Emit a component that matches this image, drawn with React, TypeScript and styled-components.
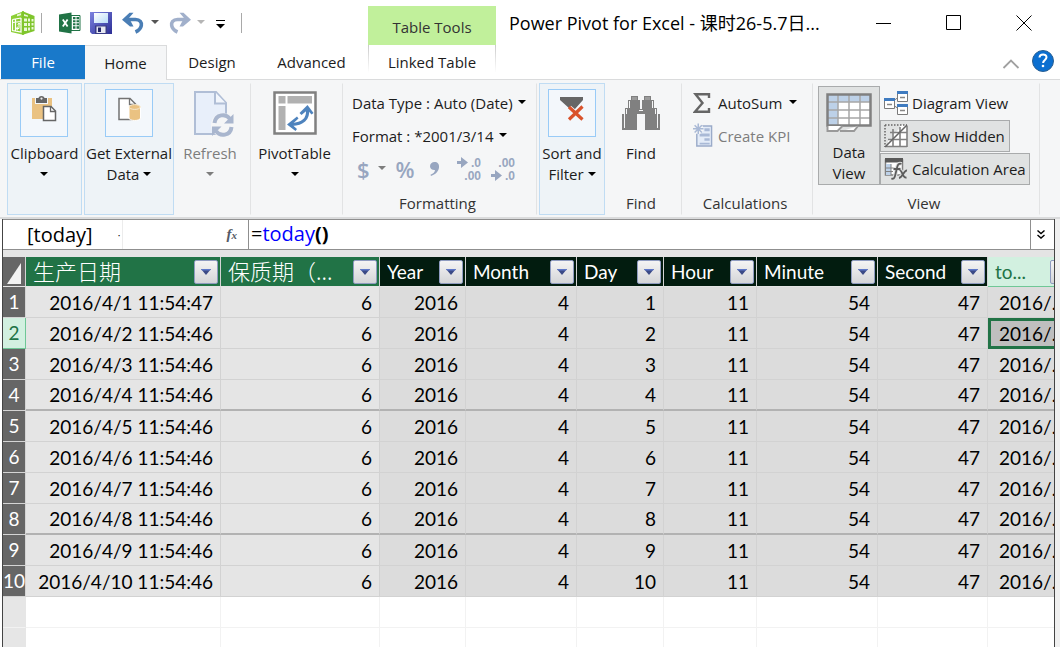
import React from 'react';
import styled, { createGlobalStyle, css } from 'styled-components';

const UI_FONT = '"Open Sans", "Noto Sans CJK SC", sans-serif';
const GRID_FONT = 'Lato, "Noto Sans CJK SC", sans-serif';

const Global = createGlobalStyle`
  * { box-sizing: border-box; }
  body { margin: 0; background: #fff; font-family: ${UI_FONT}; font-size: 15px; color: #1c1c1c; }
  button, input { font: inherit; color: inherit; }
  button { background: none; border: 0; padding: 0; margin: 0; }
`;

const Window = styled.div`
  display: flex;
  flex-direction: column;
  height: 100vh;
  overflow: hidden;
  background: #fff;
`;

/* ---------- title bar ---------- */

const TitleBar = styled.header`
  display: flex;
  height: 45px;
  flex: none;
`;

const QuickAccess = styled.div`
  display: flex;
  align-items: center;
  width: 368px;
  flex: none;
  padding-left: 10px;
`;

const Divider = styled.span`
  width: 1px;
  height: 20px;
  background: #a9a9a9;
`;

const QuickButton = styled.button<{ $gap: number }>`
  display: flex;
  align-items: center;
  margin-left: ${(p) => p.$gap}px;
`;

const ContextLabel = styled.div`
  width: 128px;
  flex: none;
  margin-top: 6px;
  background: #c1f09b;
  line-height: 43px;
  text-align: center;
  color: #333;
`;

const WindowTitle = styled.h1`
  flex: 1;
  min-width: 0;
  margin: 0;
  padding-left: 13px;
  font-size: 18px;
  font-weight: 400;
  line-height: 46px;
  white-space: nowrap;
  color: #000;
`;

const WindowButtons = styled.div`
  display: flex;
  padding-right: 1px;
`;

const WindowButton = styled.button`
  display: flex;
  align-items: center;
  justify-content: center;
  width: 70px;
  height: 45px;
`;

/* ---------- tabs ---------- */

const TabRow = styled.nav`
  display: flex;
  flex: none;
  height: 35px;
  padding: 0 5px 0 1px;
  box-shadow: inset 0 -1px #dadbdc;
`;

const Tab = styled.button<{ $width: number; $kind?: 'file' | 'active' | 'context' }>`
  width: ${(p) => p.$width}px;
  height: 34px;
  line-height: 34px;
  ${(p) =>
    p.$kind === 'file' &&
    css`
      background: #1979ca;
      color: #fff;
    `}
  ${(p) =>
    p.$kind === 'active' &&
    css`
      height: 35px;
      background: #f5f6f7;
      border: 1px solid #dadbdc;
      border-width: 1px 1px 0 0;
    `}
  ${(p) =>
    p.$kind === 'context' &&
    css`
      border: solid;
      border-width: 0 1px;
      border-image: linear-gradient(#c8c8c8, #fff 80%) 1;
    `}
`;

const TabTools = styled.div`
  display: flex;
  align-items: center;
  gap: 11px;
  margin-left: auto;
`;

/* ---------- ribbon ---------- */

const Ribbon = styled.div`
  display: flex;
  flex: none;
  height: 139px;
  padding: 3px 0 3px 7px;
  background: #f5f6f7;
  border-bottom: 2px solid #dadbdc;
`;

const Group = styled.section<{ $width: number; $collapsed?: boolean; $separator?: boolean; $gap?: number }>`
  display: flex;
  flex-direction: column;
  flex: none;
  align-items: center;
  width: ${(p) => p.$width}px;
  height: 132px;
  margin-right: ${(p) => p.$gap ?? 0}px;
  border: 1px solid transparent;
  ${(p) =>
    p.$separator &&
    css`
      padding-right: 5px;
      border-right-color: #e2e3e4;
    `}
  ${(p) =>
    p.$collapsed &&
    css`
      background: #eef3f7;
      border-color: #c0dcf3;
    `}
`;

const GroupLabel = styled.div`
  margin-top: auto;
  line-height: 21px;
  color: #333;
`;

const BigButton = styled.button<{ $muted?: boolean }>`
  display: flex;
  flex-direction: column;
  align-items: center;
  padding-top: 5px;
  line-height: 21px;
  white-space: nowrap;
  color: ${(p) => (p.$muted ? '#7d7d7d' : '#1c1c1c')};
`;

const IconSlot = styled.span<{ $boxed?: boolean }>`
  display: flex;
  align-items: center;
  justify-content: center;
  width: 48px;
  height: 48px;
  margin-bottom: 6px;
  ${(p) =>
    p.$boxed &&
    css`
      padding-bottom: 8px;
      background: #f3f7fb;
      border: 1px solid #99cbf7;
    `}
`;

const LabelLine = styled.span`
  display: flex;
  align-items: center;
  justify-content: center;
  gap: 4px;
  height: 21px;
`;

const Caret = styled.i<{ $color?: string }>`
  width: 0;
  height: 0;
  margin-bottom: 2px;
  border: 4px solid transparent;
  border-top-color: ${(p) => p.$color ?? '#000'};
  border-bottom-width: 0;
`;

const Stack = styled.div<{ $pad: number }>`
  display: flex;
  flex-direction: column;
  align-self: stretch;
  padding: 2px 0 0 ${(p) => p.$pad}px;
`;

const RowLine = styled.div`
  display: flex;
  align-items: center;
  height: 33px;
`;

const RowButton = styled.button<{ $muted?: boolean; $gap?: number }>`
  display: flex;
  align-items: center;
  gap: ${(p) => p.$gap ?? 5}px;
  height: 33px;
  white-space: nowrap;
  color: ${(p) => (p.$muted ? '#7d7d7d' : '#1c1c1c')};
`;

const FormatButton = styled.button`
  display: flex;
  align-items: center;
  gap: 8px;
  margin: 0 5px;
  font-size: 22px;
  font-weight: 600;
  color: #98a6c0;
`;

const ViewArea = styled.div`
  display: flex;
  align-self: stretch;
  padding: 2px 0 0 4px;
`;

const DataViewButton = styled(BigButton)`
  width: 62px;
  height: 99px;
  padding-top: 3px;
  background: #e0e2e2;
  border: 1px solid #a9abac;
`;

const ViewToggle = styled.button<{ $on?: boolean; $width: number }>`
  display: flex;
  align-items: center;
  gap: 4px;
  width: ${(p) => p.$width}px;
  height: 32px;
  margin-top: 1px;
  padding-left: 3px;
  white-space: nowrap;
  border: 1px solid ${(p) => (p.$on ? '#a9abac' : 'transparent')};
  background: ${(p) => (p.$on ? '#e0e2e2' : 'transparent')};
`;

/* ---------- workbook ---------- */

const Workbook = styled.main`
  display: flex;
  flex-direction: column;
  flex: 1;
  min-height: 0;
  margin: 0 5px 0 2px;
  border: solid #444;
  border-width: 0 1px;
  box-shadow: 5px 0 #f0f0f0;
  overflow: hidden;
  background: #fff;
`;

const FormulaBar = styled.div`
  display: flex;
  flex: none;
  height: 31px;
  border: solid #8f8f8f;
  border-width: 1px 0;
  font-size: 20px;
  line-height: 28px;
  color: #000;
`;

const NameBox = styled.input`
  width: 113px;
  padding: 0 0 0 24px;
  border: 0;
  outline: 0;
  background: none;
`;

const NameMenu = styled.button`
  width: 7px;
  border-right: 1px solid #ececec;
  font-size: 10px;
  line-height: 20px;
`;

const FunctionButton = styled.button`
  width: 126px;
  padding-right: 11px;
  border-right: 1px solid #8f8f8f;
  text-align: right;
  font-family: "Liberation Serif", serif;
  font-style: italic;
  font-weight: 700;
  font-size: 15px;
  color: #555a66;
  small { font-size: 11px; }
`;

const Formula = styled.div`
  flex: 1;
  min-width: 0;
  padding-left: 2px;
  white-space: nowrap;
  outline: 0;
  span { color: #00f; }
`;

const ExpandButton = styled.button`
  display: flex;
  align-items: center;
  justify-content: center;
  width: 24px;
  border-left: 1px solid #8f8f8f;
  padding-right: 3px;
`;

const Sheet = styled.div`
  flex: 1;
  min-height: 0;
  overflow: hidden;
  border-top: 7px solid #e4e4e4;
`;

const Grid = styled.table`
  table-layout: fixed;
  width: 1073px;
  border-collapse: separate;
  border-spacing: 0;
  font-family: ${GRID_FONT};
  font-size: 19px;
  color: #000;
`;

const HeadRow = styled.tr`
  height: 30px;
`;

const BodyRow = styled.tr`
  height: 31px;
`;

type Tone = 'green' | 'dark' | 'mint';
const headBg = { green: '#217346', dark: '#021c0f', mint: '#d2f0e0' };

const HeadCell = styled.th<{ $tone: Tone }>`
  padding: 0 2px 0 7px;
  background: ${(p) => headBg[p.$tone]};
  border-right: 1px solid #d4d4d4;
  border-bottom: 1px solid ${(p) => (p.$tone === 'mint' ? '#6fc796' : '#e4e4e4')};
  color: ${(p) => (p.$tone === 'mint' ? '#217346' : '#fff')};
  font-weight: 400;
  text-align: left;
`;

const HeadInner = styled.div<{ $cjk?: boolean }>`
  display: flex;
  align-items: center;
  justify-content: space-between;
  height: 29px;
  line-height: 29px;
  white-space: nowrap;
  overflow: hidden;
  ${(p) =>
    p.$cjk &&
    css`
      font-family: "Noto Sans CJK SC", sans-serif;
      font-weight: 300;
      font-size: 22px;
      line-height: 26px;
    `}
`;

const HeadText = styled.span`
  height: 29px;
`;

const FilterButton = styled.button`
  display: flex;
  flex: none;
  align-items: center;
  justify-content: center;
  width: 24px;
  height: 24px;
  border: 1px solid #8e9bc0;
  border-radius: 2px;
  background: linear-gradient(#f4f4f4, #d4d5d8);
`;

const Corner = styled.th`
  padding: 0;
  background: #666;
  border-right: 1px solid #d4d4d4;
  border-bottom: 1px solid #e4e4e4;
  svg { display: block; margin: 3px 0 0 3px; }
`;

const RowHead = styled.th<{ $state?: 'current' | 'blank' }>`
  padding: 0;
  font-weight: 400;
  line-height: 30px;
  text-align: center;
  color: #fff;
  background: #666;
  border: solid #d4d4d4;
  border-width: 0 1px 1px 0;
  ${(p) => p.$state === 'current' && 'background: #d2f0e0; color: #217346; border-color: #6fc796;'}
  ${(p) => p.$state === 'blank' && 'background: #e6e6e6; border-color: #f2f2f2 #e6e6e6;'}
`;

const Cell = styled.td<{ $kind: 'plain' | 'computed' | 'blank'; $page?: boolean; $open?: boolean }>`
  padding: 2px 7px 0;
  overflow: hidden;
  line-height: 28px;
  white-space: nowrap;
  text-align: right;
  background: ${(p) => ({ plain: '#e5e5e5', computed: '#dcdcdc', blank: '#fff' })[p.$kind]};
  border: solid ${(p) => (p.$kind === 'blank' ? '#f2f2f2' : '#d2d2d2')};
  border-width: 0 1px 1px 0;
  ${(p) =>
    p.$page &&
    css`
      padding-top: 1px;
      border-bottom: 2px solid #b2b2b2;
    `}
  ${(p) => p.$open && 'text-align: left; padding-left: 11px;'}
`;

const SelectedCell = styled(Cell)`
  padding: 1px 0 0 8px;
  background: #bfbfbf;
  border: 3px solid #217346;
  line-height: 24px;
`;

/* ---------- icons ---------- */

const AppIcon = () => (
  <svg width="26" height="26" viewBox="0 0 26 26">
    <path d="M1 6 14 1v24L1 22z" fill="#8ccf36" />
    <path d="M12 1 24.500 6v15L12 25z" fill="#7fc52c" />
    <path d="M2.500 9.500 11 8M2.500 9.500v11L11 22V8M5.500 9v12M2.500 12.500 11 11.500" stroke="#fff" fill="none" strokeWidth="1.200" />
    <path d="M14 8.500h3v3h-3zM18 8.500h2v3h-2zM21.500 9h2v2.500h-2zM14 13h3v3h-3zM18 13h2v3h-2zM21.500 13h2v2.500h-2zM14 17.500h3v3.500h-3zM18 17.500h2v3h-2zM21.500 17h2v2.500h-2zM7 4.500l4-1.300v2L7 6.200zM14 4l4 1.500v1.300L14 6z" fill="#e9f8d8" />
    <path d="M9 13.500v5H6.500M8 16.800l-2 1.700 2 1.700M7.800 14.700 9 13l1.300 1.700" stroke="#fff" fill="none" />
  </svg>
);

const ExcelIcon = () => (
  <svg width="22" height="22" viewBox="0 0 22 22">
    <path d="M12 3.500h9v15h-9z" fill="#fff" stroke="#217346" />
    <path d="M14 5h2.500v2.300H14zM17.500 5H20v2.300h-2.500zM14 8.300h2.500v2H14zM17.500 8.300H20v2h-2.500zM14 11.300h2.500v2H14zM17.500 11.300H20v2h-2.500zM14 14.300h2.500v2.500H14zM17.500 14.300H20v2.500h-2.500z" fill="#217346" />
    <path d="M0 2.500 12.500.500v21L0 19.500z" fill="#217346" />
    <path d="m3.800 7.500 4.800 7M8.600 7.500l-4.800 7" stroke="#fff" strokeWidth="1.800" />
  </svg>
);

const SaveIcon = () => (
  <svg width="22" height="22" viewBox="0 0 22 22">
    <defs>
      <linearGradient id="disk" x1="0" y1="0" x2="1" y2="1">
        <stop offset="0" stopColor="#7c83e0" />
        <stop offset="1" stopColor="#2b2d94" />
      </linearGradient>
      <linearGradient id="label" x1="0" y1="0" x2="1" y2="1">
        <stop offset="0" stopColor="#fff" />
        <stop offset="1" stopColor="#b9dcf7" />
      </linearGradient>
    </defs>
    <path d="M0 0h22v22H2l-2-2z" fill="url(#disk)" />
    <path d="M4 1h14v10H4z" fill="url(#label)" />
    <path d="M5 13.500h12V22H5z" fill="#3a3d86" />
    <path d="M6.500 14.500h9V21h-9z" fill="#e6e8f2" />
    <path d="M8 15.500h3V20H8z" fill="#23256b" />
  </svg>
);

const UndoIcon = ({ color, flip }: { color: string; flip?: boolean }) => (
  <svg width="24" height="22" viewBox="0 0 24 22">
    <g transform={flip ? 'matrix(-1 0 0 1 24 0)' : undefined}>
      <path d="M4 7.500h10.500c4.500 0 6.500 3 5.800 6.200-.6 3-2.800 5-5.800 6.300" fill="none" stroke={color} strokeWidth="3.600" />
      <path d="m1 7.700 7.500-7h4L8 6l4.500 8.500H9z" fill={color} />
    </g>
  </svg>
);

const CustomizeIcon = () => (
  <svg width="11" height="12" viewBox="0 0 11 12">
    <path d="M1 3.500h9" stroke="#000" />
    <path d="M1 7h9l-4.500 4.500z" />
  </svg>
);

const ClipboardIcon = () => (
  <svg width="26" height="26" viewBox="0 0 26 26">
    <path d="M1 2h20v21H1z" fill="#eac282" />
    <path d="M4 2h13v6H4z" fill="#f3f7fb" />
    <path d="M5 2h11v5H5z" fill="#666" />
    <path d="M7.500 2.500Q7.500 0 10.500 0t3 2.500" fill="#666" />
    <circle cx="10.500" cy="2.600" r="1.100" fill="#eee" />
    <path d="M12.500 10.500h7.500l4.500 4.500v9.500h-12z" fill="#fff" stroke="#666" strokeWidth="1.500" />
    <path d="M19.500 10.500V15.500h5" fill="none" stroke="#666" strokeWidth="1.300" />
  </svg>
);

const ExternalDataIcon = () => (
  <svg width="24" height="26" viewBox="0 0 24 26">
    <path d="M2 2.500h11l5.500 5.500v15.500H2z" fill="#fff" stroke="#737373" strokeWidth="1.500" />
    <path d="M12.500 2.500V8.500h6" fill="none" stroke="#737373" strokeWidth="1.300" />
    <path d="M12 11v11c0 3.300 11.500 3.300 11.500 0V11z" fill="#eac282" stroke="#fff" />
    <ellipse cx="17.700" cy="11" rx="5.600" ry="2.400" fill="#eac282" stroke="#f8ead0" />
  </svg>
);

const RefreshIcon = () => (
  <svg width="48" height="48" viewBox="-6 0 48 48">
    <path d="M3 3h21l10 11v31H3z" fill="#e8effa" stroke="#b0bed6" strokeWidth="2" />
    <path d="M23 3v11.500h11" fill="#f2f6fc" stroke="#b0bed6" strokeWidth="2" />
    <circle cx="31" cy="36" r="12" fill="#f5f6f7" />
    <path d="M22.500 34c1-9 11.500-10 15.500-4M39.500 38c-1 9-11.500 10-15.500 4" fill="none" stroke="#a9b6ce" strokeWidth="4" />
    <path d="M41.500 25v9.500H32zM20 47v-9.500h9.500z" fill="#a9b6ce" />
  </svg>
);

const PivotIcon = () => (
  <svg width="44" height="44" viewBox="0 0 44 44">
    <path d="M1.500 1.500h41v41h-41z" fill="#fff" stroke="#808080" strokeWidth="2.500" />
    <path d="M5.500 5h7v7.500h-7zM14.500 5h24.500v7.500H14.500zM5.500 15h7v24h-7z" fill="#b1b1b1" />
    <path d="M34.500 19c1 9-5 14-15.500 14.500" fill="none" stroke="#4e83bd" strokeWidth="3.200" />
    <path d="m26.500 22 8-8 6 8-2 1.500-4-4.500-6 5zM24 25.500 14 33.500l8.500 6.500 1.500-2-5-4.500 6.500-6z" fill="#4e83bd" />
  </svg>
);

const CommaIcon = () => (
  <svg width="22" height="16" viewBox="-4 0 22 16">
    <path d="M5.500 1c3 0 5 2 4.500 5.500-.5 4-3.500 7-8 8.500l-.5-1.200c3-1.300 4.300-2.800 4.500-4.800C3 9.200 1 7.700 1 5.200S3 1 5.500 1z" fill="#98a6c0" />
  </svg>
);

const DecimalIcon = ({ decrease }: { decrease?: boolean }) => (
  <svg width="24" height="30" viewBox="0 0 24 30" fill="#98a6c0" fontFamily="Liberation Sans, sans-serif" fontWeight="700" fontSize="12">
    <path d={decrease ? 'M0 20h4v-4l7 5.500-7 5.500v-4H0z' : 'M0 7h4V3l7 5.500L4 14v-4H0z'} />
    <text x="24" y="13" textAnchor="end">{decrease ? '.00' : '.0'}</text>
    <text x="24" y="26" textAnchor="end">{decrease ? '.0' : '.00'}</text>
  </svg>
);

const FunnelIcon = () => (
  <svg width="26" height="26" viewBox="0 0 26 26">
    <path d="M1 1h23v3l-8 9v4h-5v-4L1 4z" fill="#666" />
    <path d="m10 12 13 11M23 11 10.500 23.500" stroke="#f3f7fb" strokeWidth="6" />
    <path d="m10 11 13.500 12.500M23.500 10.500 10 23.500" stroke="#d9532c" strokeWidth="3.200" />
  </svg>
);

const BinocularsIcon = () => (
  <svg width="40" height="36" viewBox="0 0 40 36">
    <path d="M10 1h7v4h2v9h2V5h2V1h7v4h3v8h3v6h3v16H24V19h-8v16H1V19h3v-6h3V5h3z" fill="#808080" />
    <path d="M11 2v3h5V2zM24 2v3h5V2z" fill="#9b9b9b" />
    <path d="M3.500 19v14M5.500 14v5M8.500 6v7M36.500 19v14M34.500 14v5M31.500 6v7M18 15.500h4" stroke="#f5f6f7" fill="none" />
  </svg>
);

const SigmaIcon = () => (
  <svg width="18" height="22" viewBox="0 0 18 22">
    <path d="M16 6V2.200H2.500L9.500 11l-7.500 8.800h14V16" fill="none" stroke="#666" strokeWidth="2.400" />
  </svg>
);

const KpiIcon = () => (
  <svg width="20" height="25" viewBox="0 0 21 25">
    <path d="M4 2.500h15.500v21H4z" fill="#e4ecf8" stroke="#9aabc9" strokeWidth="1.500" />
    <path d="M12 5h5.500v3H12zM7 10.500h10.500v3H7zM12 15.500h5.500v2.500H12zM7 20h10.500v2H7z" fill="#a9b9d6" />
    <circle cx="5.500" cy="5.500" r="5.500" fill="#f5f6f7" />
    <path d="M5.500 0v11M0 5.500h11M1.700 1.700l7.600 7.600M9.300 1.700 1.700 9.300" stroke="#a9b9d6" strokeWidth="1.600" />
  </svg>
);

const DataViewIcon = () => (
  <svg width="46" height="40" viewBox="0 0 46 40">
    <path d="M1.500 1.500h43v31h-43z" fill="#fff" />
    <path d="M1.500 1.500h43v7.500h-43zM1.500 9h10.500v23H1.500z" fill="#bdd1e8" />
    <path d="M12 2v30M23 2v30M34 2v30M2 9h42M2 17h42M2 25h42" stroke="#a6a6a6" strokeWidth="1.500" />
    <path d="M1.500 1.500h43v31h-43z" fill="none" stroke="#808080" strokeWidth="2.500" />
    <path d="M1.500 33v5h10l5-5M16.500 38H28l4-5" fill="#fff" stroke="#999" strokeWidth="2" />
    <path d="M14 38h4" stroke="#999" strokeWidth="2" />
  </svg>
);

const DiagramIcon = () => (
  <svg width="24" height="24" viewBox="0 0 24 24">
    <path d="m9 10 6-4M9 14l6 4" stroke="#777" />
    <g fill="#fff" stroke="#7a7a7a">
      <path d="M.500 7.500h10v10H.500zM13.500.500h10v10h-10zM13.500 13.500h10v10h-10z" />
    </g>
    <path d="M0 7h11v3H0zM13 0h11v3H13zM13 13h11v3H13z" fill="#3f7bc0" />
    <path d="M3 13.500h5M16 6.500h5M16 19.500h5" stroke="#888" strokeWidth="1.500" />
  </svg>
);

const HiddenIcon = () => (
  <svg width="24" height="24" viewBox="0 0 24 24">
    <path d="M4 23V16h4v-4l8-8V1h7v22z" fill="#fff" />
    <path d="M1 1h22M1 1v22" fill="none" stroke="#666" strokeWidth="1.500" strokeDasharray="1.500 1.500" />
    <path d="M23 2v21M16 3v20M9 5v18M2 22.500h21M4 15.500h19M6 8.500h17" stroke="#808080" strokeWidth="1.600" />
    <path d="M1 23 23 1" stroke="#666" strokeWidth="1.600" />
  </svg>
);

const CalcAreaIcon = () => (
  <svg width="24" height="24" viewBox="0 0 24 24">
    <path d="M1.500 3h17v15h-17z" fill="#fff" stroke="#808080" strokeWidth="1.500" />
    <path d="M2 7h5v11H2z" fill="#bdd1e8" />
    <path d="M7 7v11M2 11h11M2 14.500h7" stroke="#808080" />
    <path d="M1 1h18v4.500H1z" fill="#595959" />
    <path d="M17.500 7c-2.500-1-3.700.500-4.300 3l-2.200 9c-.6 2.500-1.800 3.200-3.700 2.500M9.500 12h7M15.500 13.500c3-1 2.500 8 7 7M23 13.500c-3-.5-4.500 7-8 7.500" fill="none" stroke="#e0e2e2" strokeWidth="4" />
    <path d="M17.500 7c-2.500-1-3.700.500-4.300 3l-2.200 9c-.6 2.500-1.800 3.200-3.700 2.500M9.500 12h7M15.500 13.500c3-1 2.500 8 7 7M23 13.500c-3-.5-4.500 7-8 7.500" fill="none" stroke="#5c5c5c" strokeWidth="1.800" />
  </svg>
);

const FilterArrow = () => (
  <svg width="10" height="6" viewBox="0 0 10 6">
    <path d="M0 0h10L5 6z" fill="#3b4a86" />
    <path d="M0 0h10L9 1.500H1z" fill="#5e78c9" />
  </svg>
);

/* ---------- data ---------- */

const columns: { name: string; width: number; tone: Tone; cjk?: boolean }[] = [
  { name: '生产日期', width: 195, tone: 'green', cjk: true },
  { name: '保质期（...', width: 159, tone: 'green', cjk: true },
  { name: 'Year', width: 86, tone: 'dark' },
  { name: 'Month', width: 111, tone: 'dark' },
  { name: 'Day', width: 87, tone: 'dark' },
  { name: 'Hour', width: 93, tone: 'dark' },
  { name: 'Minute', width: 121, tone: 'dark' },
  { name: 'Second', width: 110, tone: 'dark' },
  { name: 'to...', width: 89, tone: 'mint' },
];

const rows = Array.from({ length: 10 }, (_, i) => {
  const n = i + 1;
  const second = n === 1 ? '47' : '46';
  return [`2016/4/${n} 11:54:${second}`, '6', '2016', '4', String(n), '11', '54', '47', '2016/...'];
});

const CURRENT_ROW = 1;

export default function App() {
  return (
    <Window>
      <Global />
      <TitleBar>
        <QuickAccess>
          <AppIcon />
          <QuickButton as="span" $gap={5}><Divider /></QuickButton>
          <QuickButton $gap={17} aria-label="Switch to workbook"><ExcelIcon /></QuickButton>
          <QuickButton $gap={9} aria-label="Save"><SaveIcon /></QuickButton>
          <QuickButton $gap={9} aria-label="Undo"><UndoIcon color="#4a7eb5" /></QuickButton>
          <QuickButton $gap={6} aria-label="Undo history"><Caret $color="#555" /></QuickButton>
          <QuickButton $gap={9} aria-label="Redo"><UndoIcon color="#a1b0cb" flip /></QuickButton>
          <QuickButton $gap={5} aria-label="Redo history"><Caret $color="#b5b5b5" /></QuickButton>
          <QuickButton $gap={10} aria-label="Customize toolbar"><CustomizeIcon /></QuickButton>
          <QuickButton as="span" $gap={15}><Divider /></QuickButton>
        </QuickAccess>
        <ContextLabel>Table Tools</ContextLabel>
        <WindowTitle>Power Pivot for Excel - 课时26-5.7日...</WindowTitle>
        <WindowButtons>
          <WindowButton aria-label="Minimize">
            <svg width="16" height="16"><path d="M0 8.500h15" stroke="#000" /></svg>
          </WindowButton>
          <WindowButton aria-label="Maximize">
            <svg width="16" height="16"><path d="M.500.500h14v14H.500z" fill="none" stroke="#000" /></svg>
          </WindowButton>
          <WindowButton aria-label="Close">
            <svg width="16" height="16"><path d="m.500.500 15 15M15.500.500l-15 15" stroke="#000" /></svg>
          </WindowButton>
        </WindowButtons>
      </TitleBar>

      <TabRow>
        <Tab $width={84} $kind="file">File</Tab>
        <Tab $width={82} $kind="active">Home</Tab>
        <Tab $width={90}>Design</Tab>
        <Tab $width={109}>Advanced</Tab>
        <span />
        <ContextTab $width={128} $kind="context">Linked Table</ContextTab>
        <TabTools>
          <button aria-label="Collapse ribbon">
            <svg width="18" height="10" viewBox="0 0 18 10"><path d="m1.500 9 7.500-7.500L16.500 9" fill="none" stroke="#a0a0a0" strokeWidth="1.800" /></svg>
          </button>
          <button aria-label="Help">
            <svg width="24" height="24" viewBox="0 0 24 24">
              <circle cx="12" cy="12" r="10.500" fill="#0b6fd0" stroke="#2a5f92" />
              <path d="M8.500 8.500c.2-4 7-4 7-.2 0 2.600-3.400 2.700-3.400 5.700" fill="none" stroke="#fff" strokeWidth="2" />
              <circle cx="12" cy="17" r="1.300" fill="#fff" />
            </svg>
          </button>
        </TabTools>
      </TabRow>

      <Ribbon>
        <Group $width={75} $gap={2} $collapsed>
          <BigButton>
            <IconSlot $boxed><ClipboardIcon /></IconSlot>
            <LabelLine>Clipboard</LabelLine>
            <LabelLine><Caret /></LabelLine>
          </BigButton>
        </Group>
        <Group $width={90} $collapsed>
          <BigButton>
            <IconSlot $boxed><ExternalDataIcon /></IconSlot>
            <LabelLine>Get External</LabelLine>
            <LabelLine>Data <Caret /></LabelLine>
          </BigButton>
        </Group>
        <Group $width={77} $separator>
          <BigButton $muted>
            <IconSlot><RefreshIcon /></IconSlot>
            <LabelLine>Refresh</LabelLine>
            <LabelLine><Caret $color="#7d7d7d" /></LabelLine>
          </BigButton>
        </Group>
        <Group $width={92} $separator>
          <BigButton>
            <IconSlot><PivotIcon /></IconSlot>
            <LabelLine>PivotTable</LabelLine>
            <LabelLine><Caret /></LabelLine>
          </BigButton>
        </Group>
        <Group $width={194} $gap={2} $separator>
          <Stack $pad={8}>
            <RowButton>Data Type : Auto (Date) <Caret /></RowButton>
            <RowButton>Format : *2001/3/14 <Caret /></RowButton>
            <RowLine>
              <FormatButton aria-label="Currency">$ <Caret $color="#7d7d7d" /></FormatButton>
              <FormatButton aria-label="Percent">%</FormatButton>
              <FormatButton aria-label="Thousands separator"><CommaIcon /></FormatButton>
              <FormatButton aria-label="Increase decimal"><DecimalIcon /></FormatButton>
              <FormatButton aria-label="Decrease decimal"><DecimalIcon decrease /></FormatButton>
            </RowLine>
          </Stack>
          <GroupLabel>Formatting</GroupLabel>
        </Group>
        <Group $width={66} $collapsed>
          <BigButton>
            <IconSlot $boxed><FunnelIcon /></IconSlot>
            <LabelLine>Sort and</LabelLine>
            <LabelLine>Filter <Caret /></LabelLine>
          </BigButton>
        </Group>
        <Group $width={77} $separator>
          <BigButton>
            <IconSlot><BinocularsIcon /></IconSlot>
            <LabelLine>Find</LabelLine>
          </BigButton>
          <GroupLabel>Find</GroupLabel>
        </Group>
        <Group $width={131} $separator>
          <Stack $pad={10}>
            <RowButton $gap={7}><SigmaIcon />AutoSum <Caret /></RowButton>
            <RowButton $muted><KpiIcon />Create KPI</RowButton>
          </Stack>
          <GroupLabel>Calculations</GroupLabel>
        </Group>
        <Group $width={227} $separator>
          <ViewArea>
            <DataViewButton>
              <IconSlot><DataViewIcon /></IconSlot>
              <LabelLine>Data</LabelLine>
              <LabelLine>View</LabelLine>
            </DataViewButton>
            <div>
              <ViewToggle $width={150}><DiagramIcon />Diagram View</ViewToggle>
              <ViewToggle $width={130} $on><HiddenIcon />Show Hidden</ViewToggle>
              <ViewToggle $width={150} $on><CalcAreaIcon />Calculation Area</ViewToggle>
            </div>
          </ViewArea>
          <GroupLabel>View</GroupLabel>
        </Group>
      </Ribbon>

      <Workbook>
        <FormulaBar>
          <NameBox aria-label="Name box" defaultValue="[today]" />
          <NameMenu aria-label="Name list">·</NameMenu>
          <FunctionButton aria-label="Insert function">f<small>x</small></FunctionButton>
          <Formula role="textbox" aria-label="Formula">=<span>today</span><b>()</b></Formula>
          <ExpandButton aria-label="Expand formula bar">
            <svg width="8" height="9" viewBox="0 0 8 9"><path d="m.500.500 3.500 3 3.500-3M.500 5l3.500 3L7.500 5" fill="none" stroke="#000" strokeWidth="1.400" /></svg>
          </ExpandButton>
        </FormulaBar>
        <Sheet>
          <Grid>
            <colgroup>
              <col width={23} />
              {columns.map((c) => <col key={c.name} width={c.width} />)}
            </colgroup>
            <thead>
              <HeadRow>
                <Corner aria-label="Select all">
                  <svg width="16" height="22"><path d="M15 1v21H1z" fill="#f2f2f2" /></svg>
                </Corner>
                {columns.map((c) => (
                  <HeadCell key={c.name} $tone={c.tone}>
                    <HeadInner $cjk={c.cjk}>
                      <HeadText>{c.name}</HeadText>
                      <FilterButton aria-label={`Filter ${c.name}`}><FilterArrow /></FilterButton>
                    </HeadInner>
                  </HeadCell>
                ))}
              </HeadRow>
            </thead>
            <tbody>
              {rows.map((row, r) => (
                <BodyRow key={r}>
                  <RowHead $state={r === CURRENT_ROW ? 'current' : undefined}>{r + 1}</RowHead>
                  {row.map((value, c) => {
                    const last = c === row.length - 1;
                    const Part = last && r === CURRENT_ROW ? SelectedCell : Cell;
                    return (
                      <Part key={c} $kind={c < 2 ? 'plain' : 'computed'} $page={r === 3 || r === 7} $open={last}>
                        {value}
                      </Part>
                    );
                  })}
                </BodyRow>
              ))}
              {[0, 1, 2].map((r) => (
                <BodyRow key={`blank${r}`}>
                  <RowHead $state="blank" />
                  {columns.map((c) => <Cell key={c.name} $kind="blank" />)}
                </BodyRow>
              ))}
            </tbody>
          </Grid>
        </Sheet>
      </Workbook>
    </Window>
  );
}

const ContextTab = styled(Tab)`
  margin-left: 2px;
`;
